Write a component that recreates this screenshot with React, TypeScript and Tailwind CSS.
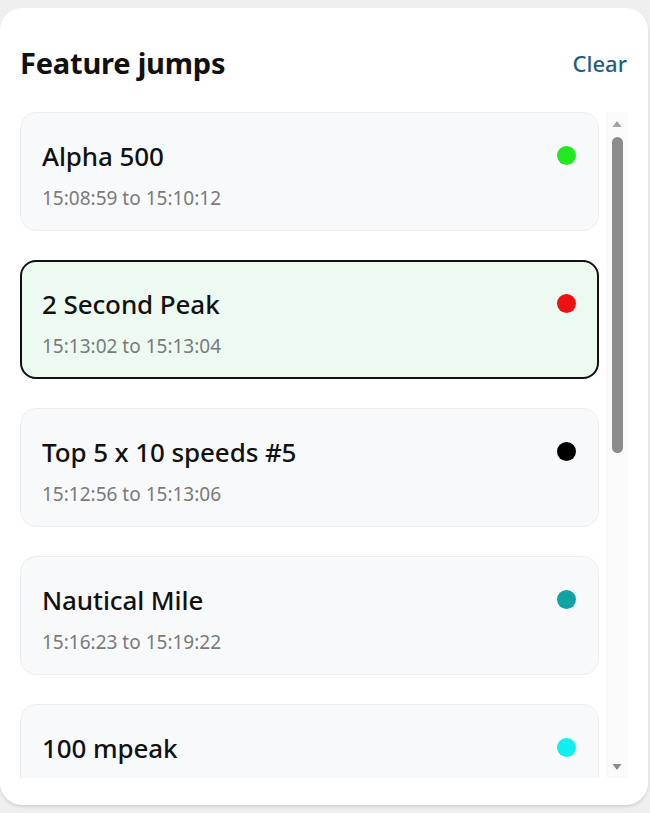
import React from "react";

type Jump = { name: string; from: string; to: string; color: string; selected?: boolean };

const jumps: Jump[] = [
  { name: "Alpha 500", from: "15:08:59", to: "15:10:12", color: "#22e822" },
  { name: "2 Second Peak", from: "15:13:02", to: "15:13:04", color: "#ee1111", selected: true },
  { name: "Top 5 x 10 speeds #5", from: "15:12:56", to: "15:13:06", color: "#000000" },
  { name: "Nautical Mile", from: "15:16:23", to: "15:19:22", color: "#11a3a3" },
  { name: "100 mpeak", from: "15:22:10", to: "15:22:19", color: "#11eef0" },
];

const JumpCard = ({ jump }: { jump: Jump }) => (
  <div
    className={
      jump.selected
        ? "shrink-0 h-[119px] rounded-[16px] border-2 border-[#111] bg-[#ecfaf2] pl-[20px] pr-[21px] pt-[25px] flex items-start"
        : "shrink-0 h-[119px] rounded-[16px] border border-[#eceef0] bg-[#f8f9fa] pl-[21px] pr-[22px] pt-[26px] flex items-start"
    }
  >
    <div className="flex-1 flex flex-col gap-[12px]">
      <span className="text-[26px] leading-[34px] font-medium text-[#111] tracking-[-0.1px]">{jump.name}</span>
      <span className="text-[19px] leading-[26px] text-[#7a7a7a]">
        {jump.from} to {jump.to}
      </span>
    </div>
    <span className="mt-[7px] w-[19px] h-[19px] rounded-full" style={{ backgroundColor: jump.color }} />
  </div>
);

const ScrollBar = () => (
  <div className="w-[22px] h-full flex flex-col items-center bg-[#fafafa]">
    <svg width="12" height="10" viewBox="0 0 12 10" className="mt-[7px]">
      <path d="M6 2 L10.5 8 L1.5 8 Z" fill="#a3a3a3" />
    </svg>
    <div className="mt-[8px] w-[11px] h-[316px] rounded-full bg-[#8c8c8c]" />
    <div className="flex-1" />
    <svg width="12" height="10" viewBox="0 0 12 10" className="mb-[6px]">
      <path d="M1.5 2 L10.5 2 L6 8 Z" fill="#8a8a8a" />
    </svg>
  </div>
);

export default function App() {
  return (
    <div className="w-[650px] h-[813px] bg-[#efefef] pt-[8px] overflow-hidden" style={{ fontFamily: '"Noto Sans", "Open Sans", sans-serif' }}>
      <div className="w-[648px] h-[797px] bg-white rounded-[22px] shadow-[0_2px_3px_rgba(0,0,0,0.12)] flex flex-col pt-[36px] pb-[27px]">
        <div className="flex items-center justify-between pl-[20px] pr-[21px] h-[38px]">
          <h2 className="text-[29px] font-bold text-[#111] tracking-[-0.2px]">Feature jumps</h2>
          <span className="text-[22px] font-medium text-[#1f5f86]">Clear</span>
        </div>
        <div className="mt-[30px] flex-1 flex pl-[20px] pr-[20px] gap-[7px] min-h-0">
          <div className="flex-1 flex flex-col gap-[29px] overflow-hidden">
            {jumps.map((j) => (
              <JumpCard key={j.name} jump={j} />
            ))}
          </div>
          <ScrollBar />
        </div>
      </div>
    </div>
  );
}
